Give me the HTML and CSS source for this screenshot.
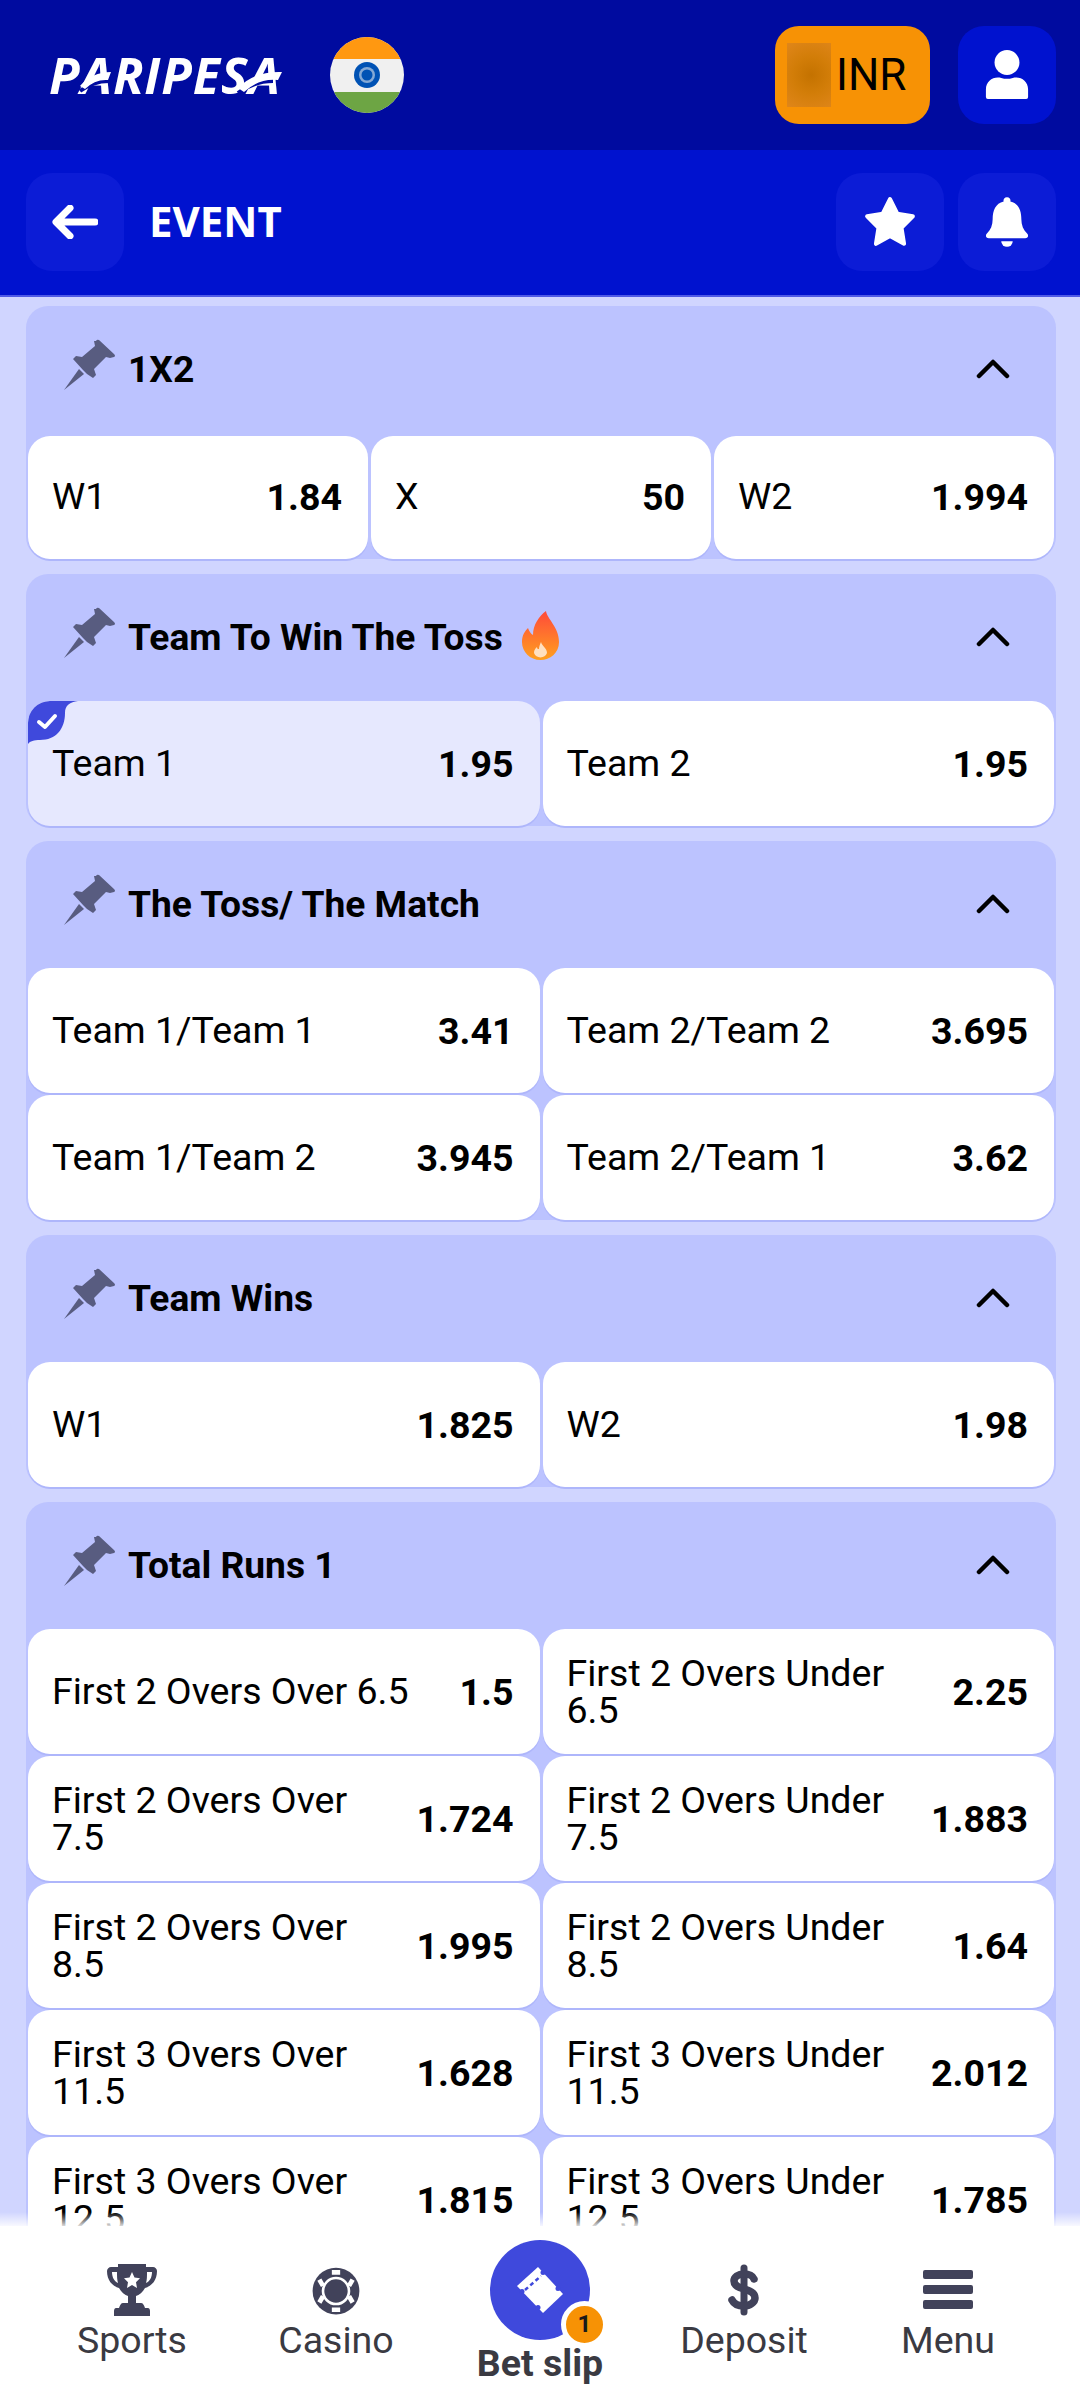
FILE: index.html
```html
<!DOCTYPE html>
<html lang="en">
<head>
<meta charset="utf-8">
<title>Event</title>
<link rel="stylesheet" href="styles.css">
</head>
<body>
<div class="page">
  <header class="topbar">
    <div class="brand"><span class="logo">PARIPESA<svg class="swoosh" viewBox="0 0 233 50"><path d="M31 41Q44 31 60 31M189 43Q205 31 224 31" fill="none" stroke="#000b9f" stroke-width="4"/><path d="M31 36Q43 22 62 22L59 30Q46 29 36 39zM189 38Q205 21 233 22L229 30Q210 28 195 42z" fill="#fff"/></svg></span>
      <svg class="flag" viewBox="0 0 74 76"><defs><clipPath id="fc"><ellipse cx="37" cy="38" rx="37" ry="38"/></clipPath></defs><g clip-path="url(#fc)"><rect width="74" height="76" fill="#f0f0f0"/><rect width="74" height="22" fill="#ff9811"/><rect y="55" width="74" height="21" fill="#6da544"/><circle cx="37" cy="38" r="13" fill="#0052b4"/><circle cx="37" cy="38" r="8" fill="#f0f0f0" opacity=".55"/><circle cx="37" cy="38" r="5.5" fill="#0052b4"/></g></svg>
    </div>
    <div class="top-actions">
      <button class="currency"><span class="blur"></span><span>INR</span></button>
      <button class="icon-btn user"><svg viewBox="0 0 48 54" width="46" height="52"><circle cx="24" cy="14" r="13" fill="#fff"/><path d="M2 50v-8C2 33 10 28 18 30q6 2 12 0c8-2 16 3 16 12v8q0 2-2 2H4q-2 0-2-2z" fill="#fff"/></svg></button>
    </div>
  </header>
  <div class="subbar">
    <div class="sub-left">
      <button class="icon-btn sub"><svg viewBox="0 0 46 34" width="46" height="34"><path d="M18 3 4 17l14 14M5 17h38" fill="none" stroke="#fff" stroke-width="7" stroke-linecap="round" stroke-linejoin="round"/></svg></button>
      <h1 class="title">EVENT</h1>
    </div>
    <div class="sub-right">
      <button class="icon-btn sub wide"><svg viewBox="0 0 54 52" width="56" height="54"><path d="M27 4l7 14 15 2.500-11 11 2.500 15.500-13.500-7.500-13.500 7.500 2.500-15.500-11-11 15-2.500z" fill="#fff" stroke="#fff" stroke-width="4" stroke-linejoin="round"/></svg></button>
      <button class="icon-btn sub"><svg viewBox="0 0 46 54" width="44" height="52"><path d="M23 1a3.500 3.500 0 0 1 3.500 4.500C35 7.500 38 15 38 24c0 6 2 11 6 15 2 2 1 5-2 5H4c-3 0-4-3-2-5 4-4 6-9 6-15C8 15 11 7.500 19.500 5.500A3.500 3.500 0 0 1 23 1z" fill="#fff"/><path d="M17 47h12a6 6 0 0 1-12 0z" fill="#fff"/></svg></button>
    </div>
  </div>

  <main class="markets">
    <section class="market">
      <div class="market-head"><div class="head-left"><svg class="pin"><use href="#pin"/></svg><span class="market-name">1X2</span></div><svg class="chev"><use href="#chev"/></svg></div>
      <div class="grid three">
        <div class="cell"><span class="label">W1</span><b class="odd">1.84</b></div>
        <div class="cell"><span class="label">X</span><b class="odd">50</b></div>
        <div class="cell"><span class="label">W2</span><b class="odd">1.994</b></div>
      </div>
    </section>
    <section class="market">
      <div class="market-head"><div class="head-left"><svg class="pin"><use href="#pin"/></svg><span class="market-name">Team To Win The Toss</span>
        <svg class="flame" viewBox="0 0 37 49"><defs><linearGradient id="fl" x1="0" y1="0" x2="0" y2="1"><stop offset="0" stop-color="#ff4a3a"/><stop offset="1" stop-color="#ffa01f"/></linearGradient></defs><path d="M24 0C25 8 37 16 37 31 37 42 28 49 18.500 49 8 49 0 41 0 31 0 24 3 20 6 17 7 20 9 23 11 24 11 14 17 5 24 0z" fill="url(#fl)"/><path d="M19 31c1 4 6 6 6 11a7 7 0 0 1-13 0c0-3 1-4 3-6 0 2 1 2 2 2 0-2 1-5 2-7z" fill="#ffe0c0"/></svg></div><svg class="chev"><use href="#chev"/></svg></div>
      <div class="grid two">
        <div class="cell picked"><svg class="tick" viewBox="0 0 50 43"><path d="M22 0H50C42 1 37 4 37 12 37 28 28 39 12 39 6 39 2 40 0 43V22C0 8 8 0 22 0z" fill="#3f49dc"/><path d="M11 21l6 5L27 15" fill="none" stroke="#fff" stroke-width="4" stroke-linecap="round" stroke-linejoin="round"/></svg><span class="label">Team 1</span><b class="odd">1.95</b></div>
        <div class="cell"><span class="label">Team 2</span><b class="odd">1.95</b></div>
      </div>
    </section>
    <section class="market">
      <div class="market-head"><div class="head-left"><svg class="pin"><use href="#pin"/></svg><span class="market-name">The Toss/ The Match</span></div><svg class="chev"><use href="#chev"/></svg></div>
      <div class="grid two">
        <div class="cell"><span class="label">Team 1/Team 1</span><b class="odd">3.41</b></div>
        <div class="cell"><span class="label">Team 2/Team 2</span><b class="odd">3.695</b></div>
        <div class="cell"><span class="label">Team 1/Team 2</span><b class="odd">3.945</b></div>
        <div class="cell"><span class="label">Team 2/Team 1</span><b class="odd">3.62</b></div>
      </div>
    </section>
    <section class="market">
      <div class="market-head"><div class="head-left"><svg class="pin"><use href="#pin"/></svg><span class="market-name">Team Wins</span></div><svg class="chev"><use href="#chev"/></svg></div>
      <div class="grid two">
        <div class="cell"><span class="label">W1</span><b class="odd">1.825</b></div>
        <div class="cell"><span class="label">W2</span><b class="odd">1.98</b></div>
      </div>
    </section>
    <section class="market">
      <div class="market-head"><div class="head-left"><svg class="pin"><use href="#pin"/></svg><span class="market-name">Total Runs 1</span></div><svg class="chev"><use href="#chev"/></svg></div>
      <div class="grid two">
        <div class="cell"><span class="label">First 2 Overs Over 6.5</span><b class="odd">1.5</b></div>
        <div class="cell"><span class="label">First 2 Overs Under 6.5</span><b class="odd">2.25</b></div>
        <div class="cell"><span class="label">First 2 Overs Over 7.5</span><b class="odd">1.724</b></div>
        <div class="cell"><span class="label">First 2 Overs Under 7.5</span><b class="odd">1.883</b></div>
        <div class="cell"><span class="label">First 2 Overs Over 8.5</span><b class="odd">1.995</b></div>
        <div class="cell"><span class="label">First 2 Overs Under 8.5</span><b class="odd">1.64</b></div>
        <div class="cell"><span class="label">First 3 Overs Over 11.5</span><b class="odd">1.628</b></div>
        <div class="cell"><span class="label">First 3 Overs Under 11.5</span><b class="odd">2.012</b></div>
        <div class="cell"><span class="label">First 3 Overs Over 12.5</span><b class="odd">1.815</b></div>
        <div class="cell"><span class="label">First 3 Overs Under 12.5</span><b class="odd">1.785</b></div>
      </div>
    </section>
  </main>

  <nav class="tabbar">
    <a class="tab"><svg class="tab-icon" viewBox="0 0 50 52"><path d="M11 0h28v3h7c2 0 4 2 4 4 0 9-5 15-12 17-2 4-6 7-9 8v7h5c2 0 3 2 4 5h3c1 0 2 1 2 3v5H7v-5c0-2 1-3 2-3h3c1-3 2-5 4-5h5v-7c-3-1-7-4-9-8C5 22 0 16 0 7c0-2 2-4 4-4h7zM5 8c0 5 2 9 6 11-1-3-1-7-1-11zm40 0h-5c0 4 0 8-1 11 4-2 6-6 6-11z" fill="#41425a"/><path d="M25 8l2.500 5.500 5.500.7-4 4 1 5.800-5-3-5 3 1-5.800-4-4 5.500-.7z" fill="#fff"/></svg><span>Sports</span></a>
    <a class="tab"><svg class="tab-icon" viewBox="0 0 48 50"><circle cx="24" cy="26" r="22.500" fill="#41425a"/><circle cx="24" cy="26" r="12.500" fill="none" stroke="#fff" stroke-width="2.500"/><g stroke="#fff" stroke-width="4.500"><path d="M20 8h8M20 44h8M8 15l3.500 6M40 37l-3.500-6M40 15l-3.500 6M8 37l3.500-6"/></g></svg><span>Casino</span></a>
    <a class="tab active"><span class="slip"><svg viewBox="45 41 50 50" width="50" height="50"><path d="M68 43 93 70 73 89 47 62z" fill="#fff"/><g fill="#3f49dc"><circle cx="73" cy="48.500" r="2.500"/><circle cx="52" cy="67.500" r="2.500"/><circle cx="88" cy="64.500" r="2.500"/><circle cx="68" cy="83.500" r="2.500"/></g><path d="M55 66 71 52" stroke="#3f49dc" stroke-width="2.500" stroke-dasharray="4 3"/></svg><span class="count">1</span></span><span>Bet slip</span></a>
    <a class="tab"><svg class="tab-icon" viewBox="0 0 32 52"><path d="M16 4v44" stroke="#41425a" stroke-width="7" stroke-linecap="round"/><path d="M26 15c-1-3-5-5-10-5-6 0-10 3-10 7 0 10 21 6 21 17 0 4-5 8-11 8-6 0-10-2-12-6" fill="none" stroke="#41425a" stroke-width="7.500" stroke-linecap="round"/></svg><span>Deposit</span></a>
    <a class="tab"><svg class="tab-icon" viewBox="0 0 50 52"><path d="M2 6h46q2 0 2 2v5q0 2-2 2H2q-2 0-2-2V8q0-2 2-2zM2 21h46q2 0 2 2v5q0 2-2 2H2q-2 0-2-2v-5q0-2 2-2zM2 36h46q2 0 2 2v5q0 2-2 2H2q-2 0-2-2v-5q0-2 2-2z" fill="#41425a"/></svg><span>Menu</span></a>
  </nav>
</div>
<svg class="defs" aria-hidden="true">
  <symbol id="pin" viewBox="0 0 52 52"><path d="M33 2q1-2 3-1l15 14q2 2 0 3l-4 1-4-1-12 12 2 6-3 3-6-4-4-4-10-11 3-3 6 1 13-11-1-5z" fill="#585c80"/><path d="M1 51l15-21 5 5z" fill="#585c80"/></symbol>
  <symbol id="chev" viewBox="0 0 36 22"><path d="M4 19 18 5l14 14" fill="none" stroke="#000" stroke-width="4.500" stroke-linecap="round" stroke-linejoin="round"/></symbol>
</svg>
</body>
</html>
```
FILE: styles.css
```css
* { box-sizing: border-box; }
html, body { margin: 0; padding: 0; }
body { font-family: Roboto, "Noto Sans", sans-serif; color: #000; background: #d0d5ff; }
button { border: 0; padding: 0; font: inherit; color: inherit; }
.page { position: relative; width: 1080px; height: 2400px; overflow: hidden; background: #d0d5ff; }
.defs { width: 0; height: 0; position: absolute; }

.topbar { height: 150px; background: #000b9f; padding: 26px 24px 26px 49px; display: flex; justify-content: space-between; align-items: center; }
.brand { display: flex; align-items: center; gap: 48px; }
.logo { position: relative; font-family: "Open Sans", sans-serif; font-style: italic; font-weight: 700; font-size: 50px; letter-spacing: 1px; color: #fff; width: 233px; line-height: 50px; white-space: nowrap; }
.swoosh { position: absolute; left: 0; top: 0; width: 233px; height: 50px; }
.flag { width: 74px; height: 76px; display: block; }
.top-actions { display: flex; gap: 28px; }
.currency { width: 155px; height: 98px; border-radius: 24px; background: #f79205; display: flex; align-items: center; padding-left: 12px; gap: 5px; font-size: 44px; color: #000; }
.blur { width: 44px; height: 64px; background: radial-gradient(circle at 55% 50%, #c47200 0%, #d27d08 45%, #e0861a 100%); }
.icon-btn { width: 98px; height: 98px; border-radius: 26px; display: flex; align-items: center; justify-content: center; }
.user { background: #0012cf; }

.subbar { height: 147px; background: #0012cf; border-bottom: 2px solid #4f5ae6; padding: 0 24px 2px 26px; display: flex; justify-content: space-between; align-items: center; }
.sub-left { display: flex; align-items: center; gap: 25px; }
.sub-right { display: flex; gap: 14px; }
.sub { background: #0c1cd6; }
.wide { width: 108px; }
.title { margin: -2px 0 0; font-family: "Noto Sans", sans-serif; font-weight: 700; font-size: 42px; line-height: 50px; color: #fff; }

.markets { padding: 9px 24px 0 26px; }
.market { background: #bcc3ff; border-radius: 22px; margin-bottom: 15px; }
.market-head { height: 127px; padding: 0 45px 4px 37px; display: flex; align-items: center; justify-content: space-between; }
.head-left { display: flex; align-items: center; gap: 13px; }
.pin { width: 52px; height: 52px; display: block; margin-top: -6px; }
.market-name { font-weight: 700; font-size: 37.2px; line-height: 44px; margin-top: 2px; }
.flame { width: 37px; height: 49px; margin-left: 6px; }
.chev { width: 36px; height: 22px; display: block; }

.grid { display: grid; gap: 2px 3px; padding: 0 2px; }
.two { grid-template-columns: 1fr 1fr; }
.three { grid-template-columns: 1fr 1fr 1fr; margin-top: 3px; }
.cell { position: relative; height: 125px; background: #fff; border-radius: 22px; padding: 0 26px 0 24px; display: flex; align-items: center; justify-content: space-between; gap: 16px; box-shadow: 0 2px 0 #aeb6fb; overflow: hidden; }
.three .cell { height: 123px; padding-bottom: 2px; }
.label { font-size: 37.5px; line-height: 37px; }
.odd { font-size: 37.5px; font-weight: 700; line-height: 40px; white-space: nowrap; }
.picked { background: #e6e8fe; }
.tick { position: absolute; left: 0; top: 0; width: 50px; height: 43px; }

.tabbar { position: absolute; left: 0; right: 0; bottom: 0; height: 174px; background: #fff; display: flex; padding: 0 30px; }
.tabbar::before { content: ""; position: absolute; left: 0; right: 0; top: -14px; height: 14px; background: linear-gradient(to bottom, rgba(255,255,255,0), rgba(255,255,255,.85)); }
.tab { flex: 1; display: flex; flex-direction: column; align-items: center; font-size: 37.5px; line-height: 42px; color: #3a3a42; padding-top: 38px; }
.tab-icon { width: 50px; height: 52px; display: block; margin-bottom: 3px; }
.active { font-weight: 700; padding-top: 14px; }
.slip { position: relative; width: 100px; height: 100px; border-radius: 50%; background: #3f49dc; display: flex; align-items: center; justify-content: center; margin-bottom: 2px; }
.count { position: absolute; right: -18px; bottom: -8px; width: 47px; height: 47px; border-radius: 50%; background: #f79205; color: #1a1a1a; font-size: 24px; line-height: 37px; text-align: center; font-weight: 700; border: 5px solid #fff; }
```
